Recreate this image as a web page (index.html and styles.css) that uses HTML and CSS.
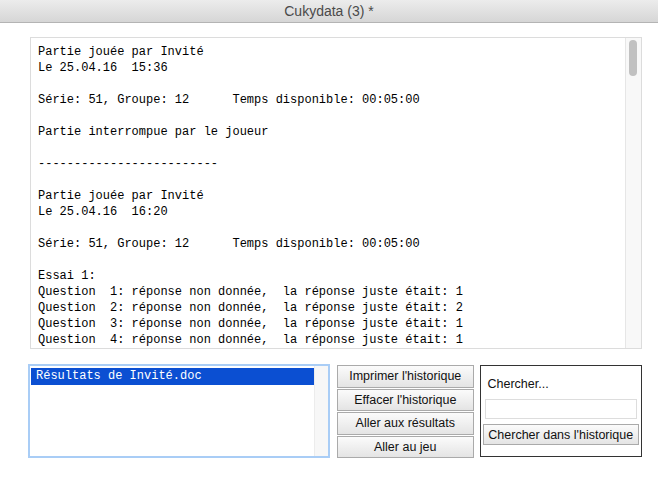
FILE: index.html
```html
<!DOCTYPE html>
<html>
<head>
<meta charset="utf-8">
<link rel="stylesheet" href="styles.css">
</head>
<body>
<div class="window">
  <div class="titlebar">Cukydata (3) *</div>
  <div class="content">
    <div class="history">
      <pre class="log">Partie jouée par Invité
Le 25.04.16  15:36

Série: 51, Groupe: 12      Temps disponible: 00:05:00

Partie interrompue par le joueur

-------------------------

Partie jouée par Invité
Le 25.04.16  16:20

Série: 51, Groupe: 12      Temps disponible: 00:05:00

Essai 1:
Question  1: réponse non donnée,  la réponse juste était: 1
Question  2: réponse non donnée,  la réponse juste était: 2
Question  3: réponse non donnée,  la réponse juste était: 1
Question  4: réponse non donnée,  la réponse juste était: 1</pre>
      <div class="vscroll"><div class="thumb"></div></div>
    </div>
    <div class="bottom">
      <div class="listbox">
        <div class="items">
          <div class="item selected">Résultats de Invité.doc</div>
        </div>
        <div class="listtrack"></div>
      </div>
      <div class="buttons">
        <button class="btn">Imprimer l'historique</button>
        <button class="btn">Effacer l'historique</button>
        <button class="btn">Aller aux résultats</button>
        <button class="btn">Aller au jeu</button>
      </div>
      <div class="search">
        <div class="search-label">Chercher...</div>
        <div class="search-input"></div>
        <button class="btn search-btn">Chercher dans l'historique</button>
      </div>
    </div>
  </div>
</div>
</body>
</html>
```

FILE: styles.css
```css
* { box-sizing: border-box; }
html, body { margin: 0; padding: 0; background: #ffffff; }
body { width: 658px; height: 502px; overflow: hidden; }
.window {
  width: 658px;
  height: 502px;
  background: #ffffff;
  border-radius: 0 0 6px 6px;
  overflow: hidden;
}
.titlebar {
  height: 23px;
  background: linear-gradient(#ececec, #d6d6d6);
  border-bottom: 1px solid #b4b4b4;
  text-align: center;
  font-family: "Liberation Sans", Arial, sans-serif;
  font-size: 14px;
  line-height: 22px;
  color: #4a4a4a;
}
.content { padding: 14px 16px 0 28px; }
.history {
  margin-left: 2px;
  width: 612px;
  height: 312px;
  border: 1px solid #dcdcdc;
  display: flex;
  overflow: hidden;
}
.log {
  flex: 1;
  margin: 0;
  padding: 6px 0 0 7px;
  font-family: "Courier New", "Liberation Mono", monospace;
  font-size: 12px;
  line-height: 16px;
  color: #000;
  overflow: hidden;
}
.vscroll {
  width: 16px;
  background: #f8f8f8;
  border-left: 1px solid #e6e6e6;
  padding: 2px 3px;
}
.thumb {
  width: 8px;
  height: 36px;
  background: #c1c1c1;
  border-radius: 4px;
}
.bottom {
  display: flex;
  align-items: flex-start;
  margin-top: 15px;
}
.listbox {
  width: 303px;
  height: 94px;
  border: 2px solid #a9cdf6;
  display: flex;
  padding: 2px 0 0 1px;
  background: #fff;
}
.items { flex: 1; }
.item {
  height: 17px;
  font-family: "Courier New", "Liberation Mono", monospace;
  font-size: 12px;
  line-height: 17px;
  padding-left: 5px;
}
.item.selected { background: #0b4fd2; color: #fff; }
.listtrack {
  width: 14px;
  margin-top: -2px;
  background: #f7f7f7;
  border-left: 1px solid #ececec;
}
.buttons {
  display: flex;
  flex-direction: column;
  gap: 1px;
  margin-left: 7px;
  margin-top: 1px;
  width: 137px;
}
.buttons .btn { height: 22.5px; }
.btn {
  height: 22px;
  margin: 0;
  padding: 0;
  background: linear-gradient(#fbfbfb, #e4e4e4);
  border: 1px solid #aaaaaa;
  font-family: "Liberation Sans", Arial, sans-serif;
  font-size: 12.5px;
  color: #111;
  text-align: center;
  line-height: 20px;
}
.search {
  margin-left: 6px;
  margin-top: 1px;
  width: 163px;
  height: 92px;
  border: 1px solid #333;
  padding: 0 3px 0 3px;
  display: flex;
  flex-direction: column;
}
.search-label {
  font-family: "Liberation Sans", Arial, sans-serif;
  font-size: 12.5px;
  color: #111;
  margin-top: 11px;
  padding-left: 4px;
  height: 22px;
}
.search-input {
  height: 20px;
  margin: 0 1px;
  border: 1px solid #dddddd;
  background: #fff;
}
.search-btn {
  margin-top: 5px;
  margin-left: -1px;
  margin-right: -1px;
  height: 21px;
}
```
